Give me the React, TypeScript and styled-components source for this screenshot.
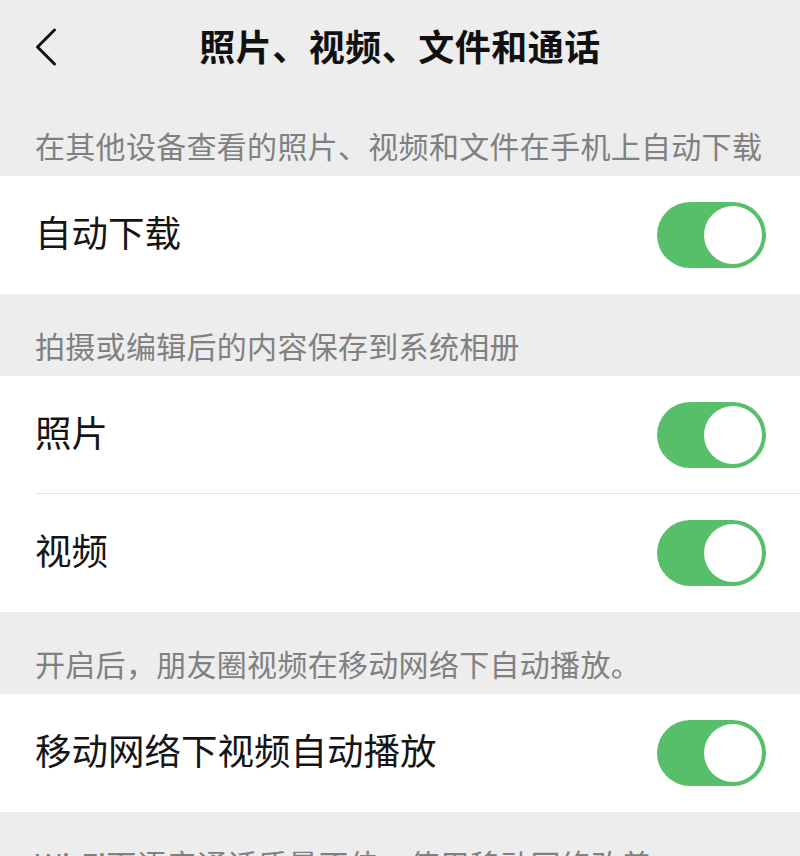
import React from "react";
import styled, { createGlobalStyle } from "styled-components";

const GlobalStyle = createGlobalStyle`
  html, body { margin: 0; padding: 0; background: #ededed; }
  body { font-family: "Noto Sans CJK SC", "Noto Sans", sans-serif; overflow: hidden; }
`;

const Page = styled.div`
  width: 800px;
  height: 856px;
  overflow: hidden;
  background: #ededed;
  display: flex;
  flex-direction: column;
`;

const NavBar = styled.div`
  height: 94px;
  flex-shrink: 0;
  display: grid;
  grid-template-columns: 100px 1fr 100px;
  align-items: center;
`;

const BackButton = styled.div`
  padding-left: 34px;
  display: flex;
  align-items: center;
  height: 100%;
`;

const Title = styled.h1`
  margin: 0 0 4px;
  text-align: center;
  font-size: 36px;
  font-weight: 700;
  color: #111;
  letter-spacing: 0.5px;
  line-height: 1;
`;

const SectionLabel = styled.div`
  flex-shrink: 0;
  padding: 31px 35px 11px;
  height: 40px;
  font-size: 30px;
  letter-spacing: 0.3px;
  line-height: 40px;
  color: #808080;
  white-space: nowrap;
`;

const Group = styled.div`
  background: #fff;
  flex-shrink: 0;
`;

const Row = styled.div<{ $divider?: boolean }>`
  height: 118px;
  padding: 0 35px;
  display: flex;
  align-items: center;
  justify-content: space-between;
  position: relative;
  ${(p) =>
    p.$divider &&
    `&::after {
      content: "";
      position: absolute;
      left: 35px;
      right: 0;
      bottom: 0;
      height: 1px;
      background: #e3e3e3;
    }`}
`;

const RowText = styled.span`
  font-size: 36.5px;
  color: #151515;
  line-height: 1;
  margin-bottom: 5px;
`;

const Switch = styled.div<{ $on: boolean }>`
  width: 109px;
  height: 66px;
  border-radius: 33px;
  background: ${(p) => (p.$on ? "#57be6a" : "#e5e5e5")};
  display: flex;
  align-items: center;
  justify-content: ${(p) => (p.$on ? "flex-end" : "flex-start")};
  padding: 0 4px;
  box-sizing: border-box;
  margin-right: -1px;
`;

const Knob = styled.div`
  width: 58px;
  height: 58px;
  border-radius: 50%;
  background: #fff;
`;

const Toggle = ({ on = true }: { on?: boolean }) => (
  <Switch $on={on}>
    <Knob />
  </Switch>
);

const BackIcon = () => (
  <svg width="24" height="40" viewBox="0 0 24 40">
    <polyline
      points="20.5,3 3.5,20 20.5,37"
      fill="none"
      stroke="#111"
      strokeWidth="3"
      strokeLinecap="round"
      strokeLinejoin="round"
    />
  </svg>
);

export default function App() {
  return (
    <>
      <GlobalStyle />
      <Page>
        <NavBar>
          <BackButton>
            <BackIcon />
          </BackButton>
          <Title>照片、视频、文件和通话</Title>
          <div />
        </NavBar>

        <SectionLabel>在其他设备查看的照片、视频和文件在手机上自动下载</SectionLabel>
        <Group>
          <Row>
            <RowText>自动下载</RowText>
            <Toggle on />
          </Row>
        </Group>

        <SectionLabel>拍摄或编辑后的内容保存到系统相册</SectionLabel>
        <Group>
          <Row $divider>
            <RowText>照片</RowText>
            <Toggle on />
          </Row>
          <Row>
            <RowText>视频</RowText>
            <Toggle on />
          </Row>
        </Group>

        <SectionLabel>开启后，朋友圈视频在移动网络下自动播放。</SectionLabel>
        <Group>
          <Row>
            <RowText>移动网络下视频自动播放</RowText>
            <Toggle on />
          </Row>
        </Group>

        <SectionLabel>Wi-Fi下语音通话质量不佳，使用移动网络改善</SectionLabel>
      </Page>
    </>
  );
}
